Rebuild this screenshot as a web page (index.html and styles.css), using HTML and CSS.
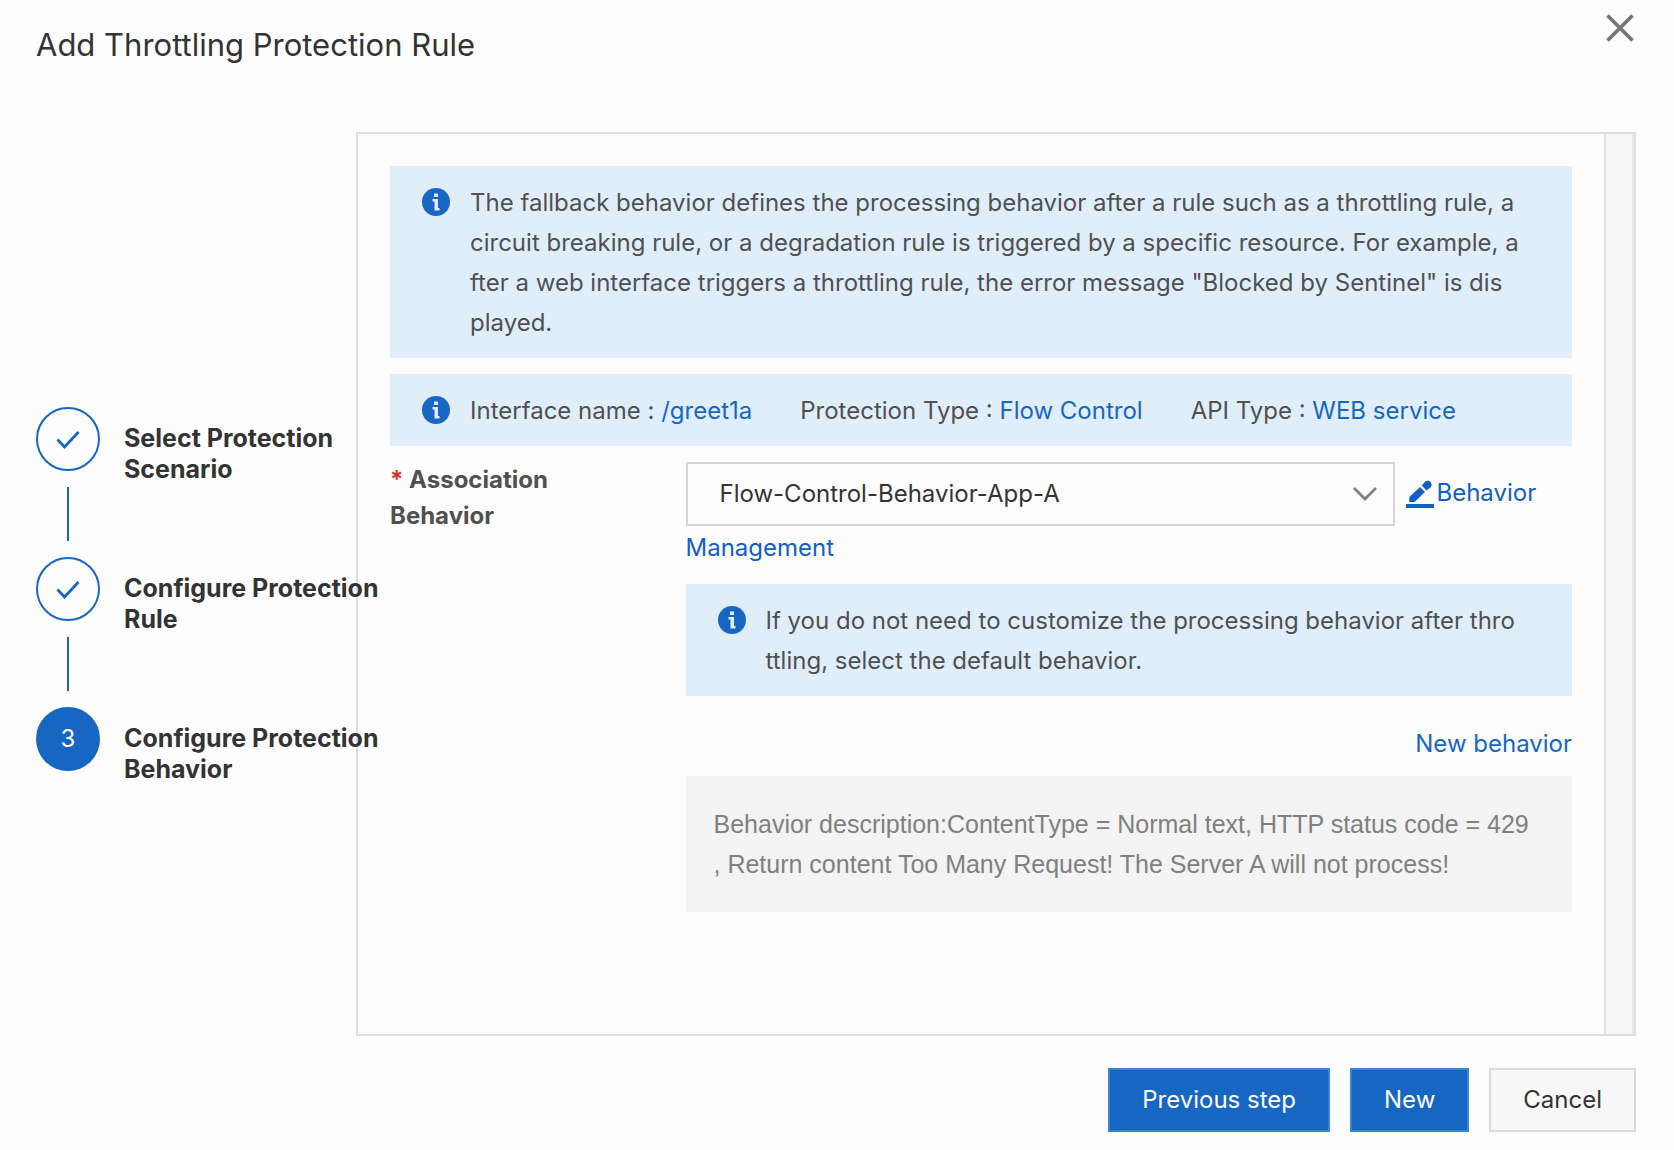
FILE: index.html
```html
<!DOCTYPE html>
<html lang="en">
<head>
<meta charset="utf-8">
<meta name="viewport" content="width=device-width, initial-scale=1">
<title>Add Throttling Protection Rule</title>
<link rel="stylesheet" href="styles.css">
</head>
<body>
<svg class="symbols" aria-hidden="true">
  <symbol id="info" viewBox="0 0 28 28">
    <circle cx="14" cy="14" r="14" fill="#1766c2"/>
    <path d="M12 5.500h4v3.500h-4zM10.500 11h5.500v9h1.500v2.500h-5v-9h-2z" fill="#e0eefc"/>
  </symbol>
  <symbol id="check" viewBox="0 0 24 20">
    <path d="M1.500 10.500 8.500 18 22.500 3" fill="none" stroke="#1766c2" stroke-width="2.800"/>
  </symbol>
</svg>
<div class="dialog">
  <header class="header">
    <h1 class="title">Add Throttling Protection Rule</h1>
    <button class="close" type="button" aria-label="Close">
      <svg width="28" height="28" viewBox="0 0 28 28"><path d="M1.500 1.500 26.500 26.500M26.500 1.500 1.500 26.500" stroke="#777" stroke-width="3.800" fill="none"/></svg>
    </button>
  </header>
  <div class="body">
    <ol class="steps">
      <li class="step">
        <span class="marker"><svg width="24" height="20"><use href="#check"/></svg></span>
        <span class="step-label">Select Protection Scenario</span>
      </li>
      <li class="step">
        <span class="marker"><svg width="24" height="20"><use href="#check"/></svg></span>
        <span class="step-label">Configure Protection Rule</span>
      </li>
      <li class="step current" aria-current="step">
        <span class="marker">3</span>
        <span class="step-label">Configure Protection Behavior</span>
      </li>
    </ol>
    <main class="panel">
      <div class="content">
        <div class="notice">
          <svg class="notice-icon"><use href="#info"/></svg>
          <p class="notice-text">The fallback behavior defines the processing behavior after a rule such as a throttling rule, a circuit breaking rule, or a degradation rule is triggered by a specific resource. For example, after a web interface triggers a throttling rule, the error message "Blocked by Sentinel" is dis<br>played.</p>
        </div>
        <div class="notice">
          <svg class="notice-icon"><use href="#info"/></svg>
          <div class="facts">
            <span>Interface name : <b class="value">/greet1a</b></span>
            <span>Protection Type : <b class="value">Flow Control</b></span>
            <span>API Type : <b class="value">WEB service</b></span>
          </div>
        </div>
        <div class="field">
          <label class="field-label" for="behavior"><span class="required">*</span> Association Behavior</label>
          <div class="field-control">
            <div class="picker">
              <span class="select-box">
                <select class="select" id="behavior"><option>Flow-Control-Behavior-App-A</option></select>
                <svg class="chevron" width="24" height="14" viewBox="0 0 24 14"><path d="M1 1 12 12 23 1" fill="none" stroke="#808080" stroke-width="2.800"/></svg>
              </span>
              <a class="link manage" href="#"><svg class="pencil" width="28" height="28" viewBox="0 0 28 28"><path d="M0 24h28v4H0zM3.300 22v-5L14 7l5 5L8.500 22zM15.800 5.500 18 3a4 4 0 1 1 5 5.500L20.500 10.500z" fill="#1260c4"/></svg>Behavior Management</a>
            </div>
            <div class="notice">
              <svg class="notice-icon"><use href="#info"/></svg>
              <p class="notice-text">If you do not need to customize the processing behavior after throttling, select the default behavior.</p>
            </div>
            <div class="actions"><a class="link" href="#">New behavior</a></div>
            <p class="description">Behavior description:ContentType = Normal text, HTTP status code = 429<br>, Return content Too Many Request! The Server A will not process!</p>
          </div>
        </div>
      </div>
      <div class="track"></div>
    </main>
  </div>
  <footer class="footer">
    <button class="button primary" type="button">Previous step</button>
    <button class="button primary" type="button">New</button>
    <button class="button" type="button">Cancel</button>
  </footer>
</div>
</body>
</html>
```
FILE: styles.css
```css
*, *::before, *::after { box-sizing: border-box; }

body {
  margin: 0;
  background: #fdfdfd;
  color: #333;
  font: 24px/40px Inter, "Liberation Sans", sans-serif;
}

h1, p, ol { margin: 0; padding: 0; }

.symbols { position: absolute; width: 0; height: 0; }

.dialog {
  display: flex;
  flex-direction: column;
  min-height: 100vh;
  padding: 0 38px 18px 36px;
}

.header {
  display: flex;
  justify-content: space-between;
  align-items: flex-start;
  height: 132px;
}

.title { padding-top: 25px; font-size: 31px; font-weight: 400; }

.close {
  display: flex;
  margin: 14px 2px 0 0;
  padding: 0;
  border: 0;
  background: none;
}

.body {
  display: grid;
  grid-template-columns: 320px minmax(0, 1fr);
  flex: 1;
}

/* Steps */
.steps { align-self: center; padding-top: 10px; list-style: none; }

.step {
  display: grid;
  grid-template-columns: 64px 256px;
  grid-template-rows: 64px 54px;
  column-gap: 24px;
  row-gap: 16px;
  width: max-content;
  padding-bottom: 16px;
}

.step.current { grid-template-rows: 64px; padding-bottom: 0; }

.step:not(.current)::after {
  content: "";
  width: 2px;
  background: #1766c2;
  justify-self: center;
}

.marker {
  display: flex;
  align-items: center;
  justify-content: center;
  border: 2px solid #1766c2;
  border-radius: 50%;
}

.current .marker { background: #1766c2; color: #fff; }

.step-label {
  grid-row: 1;
  grid-column: 2;
  padding-top: 16px;
  font-size: 25px;
  font-weight: 700;
  line-height: 31px;
  z-index: 1;
}

/* Panel */
.panel { display: flex; border: 2px solid #dedede; }

.content {
  display: flex;
  flex-direction: column;
  gap: 16px;
  flex: 1;
  min-width: 0;
  padding: 32px;
}

.track {
  width: 30px;
  background: #f7f7f7;
  border-left: 2px solid #e2e2e2;
  border-right: 2px solid #e8e8e8;
}

.notice {
  display: flex;
  gap: 20px;
  padding: 17px 52px 15px 32px;
  background: #e0eefc;
  color: #505050;
}

.notice-icon { flex: none; width: 28px; height: 28px; margin-top: 5px; }

.notice-text { word-break: break-all; }

.facts { display: flex; flex-wrap: wrap; column-gap: 48px; }

.value { color: #1766c2; font-weight: 400; }

.field { display: grid; grid-template-columns: 1fr 3fr; }

.field-label {
  padding-right: 96px;
  color: #505050;
  font-weight: 700;
  line-height: 36px;
}

.required { color: #d93026; }

.picker { line-height: 44px; margin-bottom: 14px; }

.select-box {
  display: inline-block;
  position: relative;
  width: 80%;
  height: 64px;
  margin-right: 5px;
  vertical-align: middle;
}

.select {
  width: 100%;
  height: 100%;
  padding: 0 64px 0 32px;
  border: 2px solid #d4d4d4;
  border-radius: 0;
  background: transparent;
  color: #333;
  font: inherit;
  appearance: none;
}

.chevron { position: absolute; right: 18px; top: 25px; pointer-events: none; }

.link { color: #1766c2; text-decoration: none; }

.manage { color: #1260c4; }

.pencil { margin-right: 2px; vertical-align: -7px; }

.actions { padding: 28px 0 12px; text-align: right; }

.description {
  padding: 28px;
  background: #f3f3f3;
  color: #808080;
  font-family: "Liberation Sans", Arial, sans-serif;
  font-size: 25px;
}

.footer {
  display: flex;
  justify-content: flex-end;
  gap: 20px;
  padding-top: 32px;
}

.button {
  height: 64px;
  padding: 0 32px;
  border: 2px solid #d9d9d9;
  background: #f7f7f7;
  color: #333;
  font: inherit;
}

.primary { border-color: #3d84d0; background: #1766c2; color: #fff; }
```
